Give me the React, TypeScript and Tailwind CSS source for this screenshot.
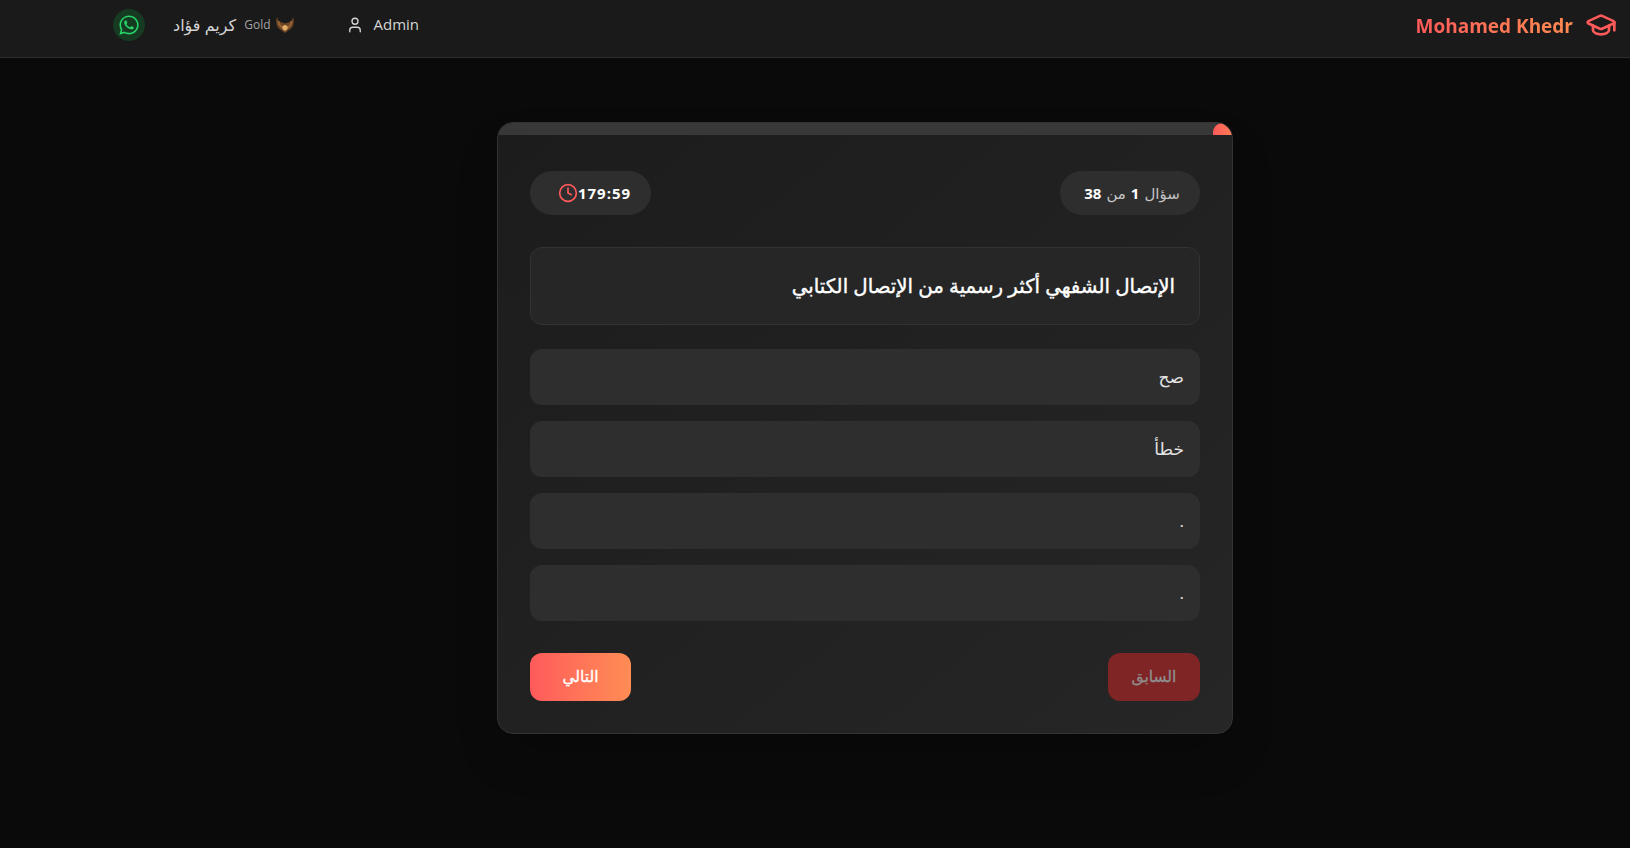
import { Clock, GraduationCap, User } from 'lucide-react';
import { FaWhatsapp } from 'react-icons/fa';

const OPTIONS = ['صح', 'خطأ', '.', '.'];

function Eagle() {
    return (
        <svg viewBox="0 0 20 16" className="w-5 h-4 -ml-1">
            <path d="M2 0 C0 6 2 11 6 13 L10 16 L14 13 C18 11 20 6 18 0 C17.500 3 16 5 13 5.500 L10 6.500 L7 5.500 C4 5 2.500 3 2 0 Z" fill="#6f4524" />
            <path d="M3.500 4 C4 8 6 10 8 11 M16.500 4 C16 8 14 10 12 11" stroke="#a06e3c" strokeWidth="1.4" fill="none" />
            <path d="M7.500 9 L10 8 L12.500 9 L12.500 12 L10 14 L7.500 12 Z" fill="#e0b068" />
        </svg>
    );
}

export default function App() {
    return (
        <div dir="rtl" className="min-h-screen bg-[#0a0a0a] font-['Open_Sans','DejaVu_Sans',sans-serif]">
            {/* Top bar */}
            <header className="h-[58px] bg-[#1a1a1a] border-b border-[#2d2d2d] flex items-center justify-between pr-[13px] pl-[113px] pb-[8px]">
                <div className="flex items-center gap-3">
                    <GraduationCap className="w-[32px] h-[32px] text-[#ff5a5a]" strokeWidth={2} />
                    <span className="mt-[3px] text-[19px] font-bold bg-gradient-to-r from-[#ff5a5a] to-[#ff8a50] bg-clip-text text-transparent">Mohamed Khedr</span>
                </div>
                <div className="flex items-center gap-[51px]">
                    <div dir="ltr" className="flex items-center gap-[10px] text-[15px] text-[#d4d4d4]">
                        <User className="w-[18px] h-[18px]" strokeWidth={1.8} />
                        <span>Admin</span>
                    </div>
                    <div className="flex items-center gap-[28px]">
                        <div className="flex items-center gap-2">
                            <Eagle />
                            <span className="text-[12px] text-[#a3a3a3]">Gold</span>
                            <span className="text-[16px] text-[#d4d4d4]">كريم فؤاد</span>
                        </div>
                        <div className="w-8 h-8 rounded-full bg-[#163a22] flex items-center justify-center">
                            <FaWhatsapp className="w-[22px] h-[22px] text-[#25d366]" />
                        </div>
                    </div>
                </div>
            </header>

            {/* Quiz card */}
            <main className="flex justify-center pt-[64px] pl-[100px]">
                <div className="w-[736px] h-[612px] rounded-[16px] border border-[#333333] bg-gradient-to-br from-[#1c1c1c] to-[#262626] overflow-hidden shadow-2xl">
                    <div className="h-3 bg-[#383838]">
                        <div className="h-3 w-[19px] bg-gradient-to-r from-[#ff5a5a] to-[#ff7a55] rounded-t-[10px]" />
                    </div>
                    <div className="px-8 pt-9">
                        <div className="flex items-center justify-between h-11">
                            <div className="h-11 w-[140px] rounded-full bg-[#2e2e2e] flex items-center justify-center gap-[5px] pl-1 text-[15px] text-[#c4c4c4]">
                                <span>سؤال</span>
                                <b className="text-white">1</b>
                                <span>من</span>
                                <b className="text-white">38</b>
                            </div>
                            <div dir="ltr" className="h-11 w-[121px] rounded-full bg-[#2e2e2e] flex items-center justify-center pl-2 text-[15px] font-bold text-white tracking-[1px]">
                                <Clock className="w-5 h-5 text-[#ff5a5a]" />
                                <span>179:59</span>
                            </div>
                        </div>
                        <div className="mt-8 h-[78px] rounded-[12px] border border-[#333333] bg-[#262626] flex items-center px-6 text-[19.8px] text-white [-webkit-text-stroke:0.4px_white]">
                            الإتصال الشفهي أكثر رسمية من الإتصال الكتابي
                        </div>
                        <div className="mt-6 flex flex-col gap-4">
                            {OPTIONS.map((opt, i) => (
                                <div key={i} className="h-14 rounded-[12px] bg-[#2e2e2e] flex items-center px-4 text-[17px] text-[#e5e5e5]">
                                    {opt}
                                </div>
                            ))}
                        </div>
                        <div className="mt-8 flex justify-between">
                            <button className="h-12 w-[92px] rounded-[12px] bg-[#802525] text-[15.5px] text-[#8f8f8f] [-webkit-text-stroke:0.3px_#8f8f8f]">السابق</button>
                            <button className="h-12 w-[101px] rounded-[12px] bg-gradient-to-r from-[#ff5a5a] to-[#ff8c55] text-[15.5px] text-white [-webkit-text-stroke:0.3px_white]">التالي</button>
                        </div>
                    </div>
                </div>
            </main>
        </div>
    );
}
